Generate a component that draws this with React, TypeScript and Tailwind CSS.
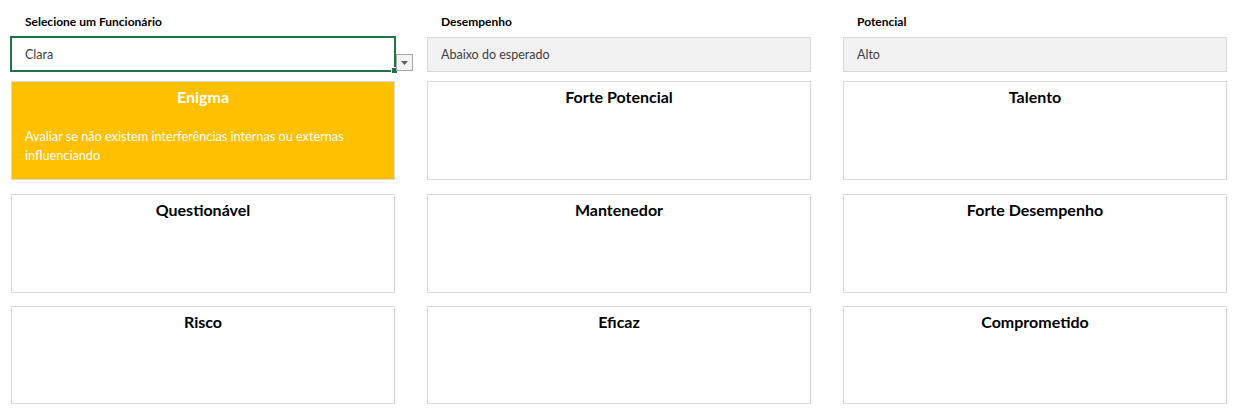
import React from "react";

const font = { fontFamily: "Lato, 'Open Sans', sans-serif" };

function Card({ title, text, yellow }: { title: string; text?: string; yellow?: boolean }) {
  return (
    <div
      className={`h-full border border-[#d9d9d9] flex flex-col ${yellow ? "bg-[#ffc000] text-white" : "bg-white text-black"}`}
    >
      <div className="pt-[5px] text-center text-[16px] font-bold leading-[20px]">{title}</div>
      {text && (
        <div className="mt-[20px] px-[13px] text-[12.7px] leading-[19px]">{text}</div>
      )}
    </div>
  );
}

export default function App() {
  return (
    <div className="w-[1237px] h-[408px] bg-white overflow-hidden" style={font}>
      <div className="pl-[11px] grid grid-cols-[384px_384px_384px] gap-x-[32px]">
        {/* Column 1 header */}
        <div className="flex flex-col">
          <div className="h-[37px] pt-[13px] pl-[14px] text-[12px] font-bold leading-[17px] text-black">
            Selecione um Funcionário
          </div>
          <div className="relative -mt-[1px] -ml-[1px] w-[386px] h-[36px] border-2 border-[#217346] flex items-center pt-[2px] pl-[13px] text-[12.5px] text-[#404040]">
            Clara
            <div className="absolute -right-[3px] -bottom-[3px] w-[5px] h-[5px] bg-[#217346] outline outline-1 outline-white" />
            <div className="absolute -right-[19px] top-[16px] w-[17px] h-[17px] border border-[#a6a6a6] bg-[#f3f3f3] flex items-center justify-center">
              <svg width="7" height="4" viewBox="0 0 7 4">
                <path d="M0 0 H7 L3.5 4 Z" fill="#5f5f5f" />
              </svg>
            </div>
          </div>
        </div>
        {/* Column 2 header */}
        <div className="flex flex-col">
          <div className="h-[37px] pt-[13px] pl-[14px] text-[12px] font-bold leading-[17px] text-black">
            Desempenho
          </div>
          <div className="h-[35px] border border-[#d9d9d9] bg-[#f2f2f2] flex items-center pt-[2px] pl-[13px] text-[12.5px] text-[#404040]">
            Abaixo do esperado
          </div>
        </div>
        {/* Column 3 header */}
        <div className="flex flex-col">
          <div className="h-[37px] pt-[13px] pl-[14px] text-[12px] font-bold leading-[17px] text-black">
            Potencial
          </div>
          <div className="h-[35px] border border-[#d9d9d9] bg-[#f2f2f2] flex items-center pt-[2px] pl-[13px] text-[12.5px] text-[#404040]">
            Alto
          </div>
        </div>
      </div>

      <div className="mt-[9px] pl-[11px] grid grid-cols-[384px_384px_384px] grid-rows-[99px_99px_98px] gap-x-[32px] gap-y-[13.5px]">
        <Card title="Enigma" text="Avaliar se não existem interferências internas ou externas influenciando" yellow />
        <Card title="Forte Potencial" />
        <Card title="Talento" />
        <Card title="Questionável" />
        <Card title="Mantenedor" />
        <Card title="Forte Desempenho" />
        <Card title="Risco" />
        <Card title="Eficaz" />
        <Card title="Comprometido" />
      </div>
    </div>
  );
}
